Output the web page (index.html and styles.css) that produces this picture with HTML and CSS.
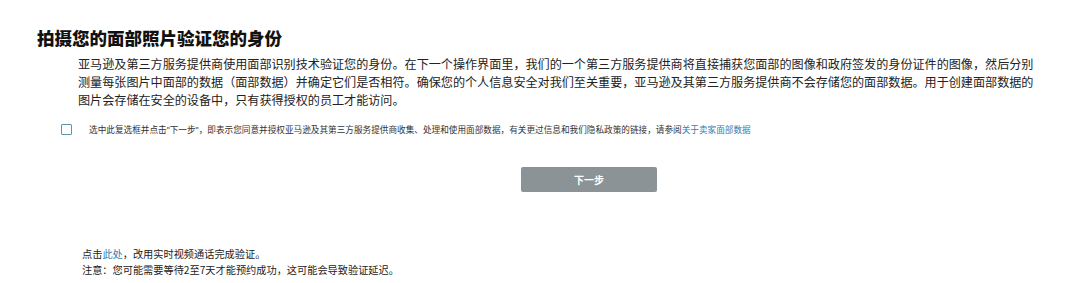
FILE: index.html
```html
<!DOCTYPE html>
<html lang="zh-CN">
<head>
<meta charset="utf-8">
<link rel="stylesheet" href="styles.css">
</head>
<body>
<div class="page">
  <h1 class="title">拍摄您的面部照片验证您的身份</h1>
  <p class="intro">亚马逊及第三方服务提供商使用面部识别技术验证您的身份。在下一个操作界面里，我们的一个第三方服务提供商将直接捕获您面部的图像和政府签发的身份证件的图像，然后分别测量每张图片中面部的数据（面部数据）并确定它们是否相符。确保您的个人信息安全对我们至关重要，亚马逊及其第三方服务提供商不会存储您的面部数据。用于创建面部数据的图片会存储在安全的设备中，只有获得授权的员工才能访问。</p>
  <label class="consent">
    <span class="box"></span>
    <span class="consent-text">选中此复选框并点击<span class="q">"</span>下一步<span class="q">"</span>，即表示您同意并授权亚马逊及其第三方服务提供商收集、处理和使用面部数据，有关更过信息和我们隐私政策的链接，请参阅<a class="link" href="#">关于卖家面部数据</a></span>
  </label>
  <div class="actions">
    <button class="next" type="button">下一步</button>
  </div>
  <div class="notes">
    <p class="note">点击<a class="link" href="#">此处</a>，改用实时视频通话完成验证。</p>
    <p class="note">注意：您可能需要等待2至7天才能预约成功，这可能会导致验证延迟。</p>
  </div>
</div>
</body>
</html>
```
FILE: styles.css
```css
html, body {
  margin: 0;
  padding: 0;
  background: #fff;
}
body {
  font-family: "Noto Sans CJK SC", "Noto Sans", sans-serif;
  color: #222;
}
.page {
  padding-top: 26px;
}
.title {
  margin: 0 0 0 37px;
  font-size: 17.5px;
  line-height: 24px;
  font-weight: 900;
  color: #111;
}
.intro {
  margin: 5px 0 0 78px;
  width: 962px;
  font-size: 12.1px;
  line-height: 18px;
  color: #222;
}
.consent {
  display: flex;
  align-items: center;
  margin: 13px 0 0 61px;
  height: 14px;
}
.box {
  width: 9px;
  height: 9px;
  border: 1.5px solid #5d95b0;
  border-radius: 1px;
  flex: none;
}
.consent-text {
  margin-left: 17px;
  font-size: 8.65px;
  line-height: 14px;
  color: #333;
}
.q {
  font-family: "Liberation Sans", sans-serif;
}
.link {
  color: #2f7db3;
  text-decoration: none;
}
.actions {
  margin: 31px 0 0 521px;
}
.next {
  display: block;
  width: 136px;
  height: 25px;
  padding: 0;
  border: 0;
  border-radius: 2px;
  background: #8c9396;
  color: #fff;
  font-family: inherit;
  font-size: 10px;
  font-weight: 700;
}
.notes {
  margin: 54px 0 0 82px;
}
.note {
  margin: 0;
  font-size: 10.2px;
  line-height: 16px;
  color: #222;
}
```
